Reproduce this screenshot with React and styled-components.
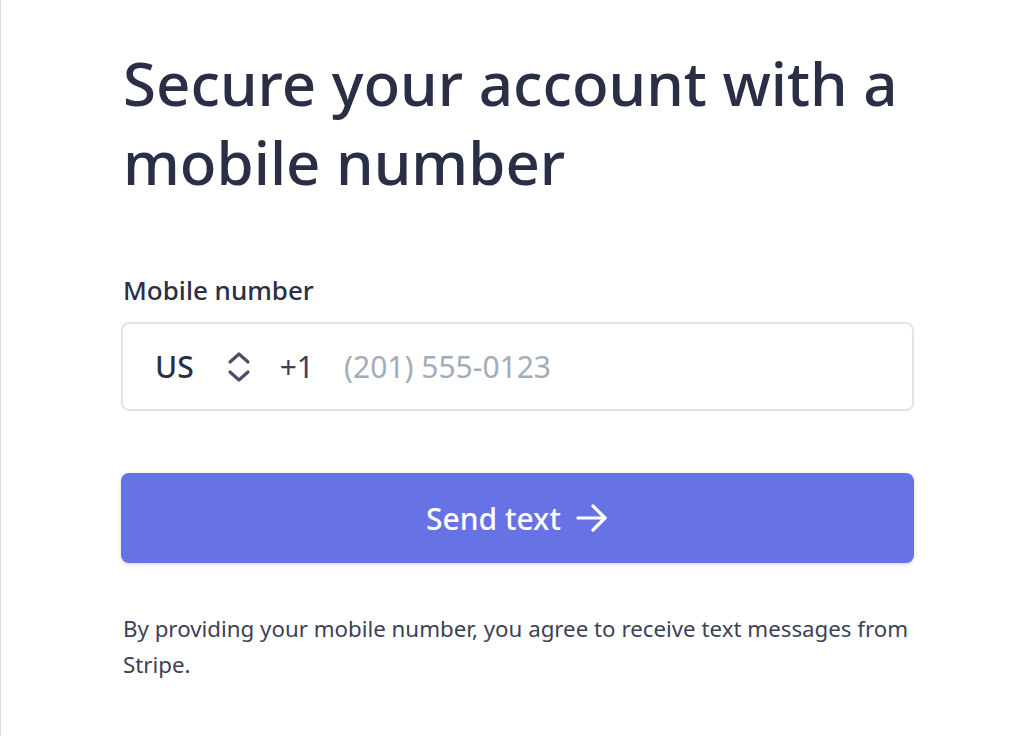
import React from "react";
import styled, { createGlobalStyle } from "styled-components";

const Global = createGlobalStyle`
  html, body { margin: 0; padding: 0; background: #fff; }
  body { font-family: "Noto Sans", "Open Sans", sans-serif; }
`;

const Page = styled.div`
  min-height: 736px;
  box-sizing: border-box;
  border-left: 1px solid #d9d9de;
  padding: 44px 0 0 120px;
`;

const Form = styled.div`
  width: 793px;
  display: flex;
  flex-direction: column;
`;

const Title = styled.h1`
  margin: 0;
  font-size: 60px;
  line-height: 79px;
  font-weight: 500;
  color: #2a2f45;
  padding-left: 2px;
`;

const Label = styled.label`
  margin-top: 72px;
  font-size: 26px;
  line-height: 32px;
  font-weight: 500;
  color: #2a2f45;
  padding-left: 2px;
`;

const Field = styled.div`
  margin-top: 16px;
  height: 89px;
  box-sizing: border-box;
  border: 2px solid #e3e4ea;
  border-radius: 8px;
  display: flex;
  align-items: center;
  padding: 0 32px;
  font-size: 30px;
`;

const Country = styled.span`
  font-weight: 500;
  color: #2a2f45;
`;

const Chevrons = styled.svg`
  margin-left: 32px;
  width: 26px;
  height: 34px;
  color: #4a5068;
`;

const Code = styled.span`
  margin-left: 28px;
  color: #3c4257;
`;

const Placeholder = styled.span`
  margin-left: 30px;
  color: #a3acb9;
`;

const Button = styled.button`
  margin-top: 62px;
  height: 90px;
  border: none;
  border-radius: 8px;
  background: #6772e5;
  box-shadow: 0 2px 5px rgba(50, 50, 93, 0.12), 0 1px 2px rgba(0, 0, 0, 0.08);
  color: #fff;
  font-family: inherit;
  font-size: 30px;
  font-weight: 500;
  display: flex;
  align-items: center;
  justify-content: center;
  gap: 14px;
  cursor: pointer;
`;

const Arrow = styled.svg`
  width: 34px;
  height: 34px;
`;

const Note = styled.p`
  margin: 48px 0 0;
  padding-left: 2px;
  font-size: 22.3px;
  line-height: 36px;
  color: #3c4257;
`;

export default function App() {
  return (
    <>
      <Global />
      <Page>
        <Form>
          <Title>Secure your account with a mobile number</Title>
          <Label>Mobile number</Label>
          <Field>
            <Country>US</Country>
            <Chevrons viewBox="0 0 26 34" fill="none" stroke="currentColor" strokeWidth="3.2" strokeLinecap="round" strokeLinejoin="round">
              <path d="M4 12 L13 4 L22 12" />
              <path d="M4 22 L13 30 L22 22" />
            </Chevrons>
            <Code>+1</Code>
            <Placeholder>(201) 555-0123</Placeholder>
          </Field>
          <Button>
            Send text
            <Arrow viewBox="0 0 34 34" fill="none" stroke="currentColor" strokeWidth="3.2" strokeLinecap="round" strokeLinejoin="round">
              <path d="M3 17 H30" />
              <path d="M18 5 L30 17 L18 29" />
            </Arrow>
          </Button>
          <Note>By providing your mobile number, you agree to receive text messages from Stripe.</Note>
        </Form>
      </Page>
    </>
  );
}
